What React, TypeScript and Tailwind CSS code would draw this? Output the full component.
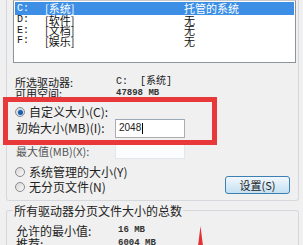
import React from 'react'

const DRIVES = [
  { d: 'C:', label: '[系统]', size: '托管的系统', selected: true },
  { d: 'D:', label: '[软件]', size: '无' },
  { d: 'E:', label: '[文档]', size: '无' },
  { d: 'F:', label: '[娱乐]', size: '无' },
]

const cjk = "font-['Noto_Sans_CJK_SC','Liberation_Sans',sans-serif]"
const mono = "font-['Liberation_Mono','Noto_Sans_CJK_SC',monospace]"

function Radio({ checked }: { checked?: boolean }) {
  return (
    <span className="w-[10px] h-[10px] rounded-full border border-[#8a8a8a] bg-gradient-to-br from-[#d6d6d6] to-[#fbfbfb] flex items-center justify-center shrink-0">
      {checked && <span className="w-[5px] h-[5px] rounded-full bg-[#1d5fa8] shadow-[0_0_2px_#5aa0e8]" />}
    </span>
  )
}

export default function App() {
  return (
    <div className={`w-[303px] h-[245px] overflow-hidden bg-[#f0f0f0] relative text-[11px] text-[#222] ${cjk}`}>

      {/* ── Per-drive group ───────────────────────────── */}
      <div className="ml-[6px] w-[293px] h-[201px] border-x border-b border-[#d5d9de] rounded-b-[3px] flex flex-col">

        {/* Drive list */}
        <div className="ml-[6px] w-[283px] h-[63px] bg-white border border-[#8e9299] border-t-[#c8c8c8] pt-[1px] pl-[1px] pr-[1px]">
          {DRIVES.map((r) => (
            <div
              key={r.d}
              className={`flex items-center leading-none ${r.selected ? 'h-[13px] bg-[#3d8fe6] text-white' : 'h-[10.5px] text-[#111]'}`}
            >
              <span className={`w-[30px] pl-[2px] ${mono} text-[10px]`}>{r.d}</span>
              <span className="w-[139px] text-[11px]">{r.label}</span>
              <span className="text-[11px]">{r.size}</span>
            </div>
          ))}
        </div>

        {/* Selected drive info */}
        <div className="mt-[13px] h-[12px] flex items-center pl-[8px] leading-none">
          <span className="w-[101px]">所选驱动器:</span>
          <span className={`${mono} text-[10px]`}>C:&nbsp;&nbsp;[系统]</span>
        </div>
        <div className="h-[11px] flex items-center pl-[8px] leading-none">
          <span className="w-[101px]">可用空间:</span>
          <span className={`${mono} text-[9px] font-bold text-[#333]`}>47898 MB</span>
        </div>

        {/* Highlighted custom size */}
        <div className="-mt-[2px] -ml-[4px] w-[214px] h-[48px] border-[5px] border-[#e8383a] relative z-10 flex flex-col">
          <div className="mt-[4px] h-[12px] flex items-center gap-[4px] pl-[7px] leading-none text-[12px]">
            <Radio checked />
            <span>自定义大小(C):</span>
          </div>
          <div className="h-[20px] flex items-center pl-[8px] leading-none text-[12px]">
            <span className="w-[99px]">初始大小(MB)(I):</span>
            <div className="w-[70px] h-[19px] bg-white border border-[#abadb3] border-t-[#9ba8b8] flex items-center pl-[3px] text-[10px] font-['Liberation_Sans',sans-serif]">
              2048<span className="w-px h-[11px] bg-black ml-px" />
            </div>
          </div>
        </div>

        <div className="-mt-[2px] h-[16px] flex items-center pl-[9px] leading-none text-[11px] text-[#555]">
          <span className="w-[99px]">最大值(MB)(X):</span>
          <div className="w-[70px] h-[15px] bg-[#fbfcfd] border border-[#e3e6ea]" />
        </div>

        <div className="mt-[7px] h-[12px] flex items-center gap-[4px] pl-[8px] leading-none text-[12px]">
          <Radio />
          <span>系统管理的大小(Y)</span>
        </div>
        <div className="mt-[2px] h-[14px] flex items-center gap-[4px] pl-[8px] leading-none text-[12px]">
          <Radio />
          <span>无分页文件(N)</span>
          <button className="ml-auto mr-[8px] -mt-[4px] w-[65px] h-[18px] rounded-[3px] border border-[#3c7fb1] bg-gradient-to-b from-[#f1f8fd] to-[#c4e0f2] text-[11px] leading-none">
            设置(S)
          </button>
        </div>
      </div>

      {/* ── Totals group ──────────────────────────────── */}
      <div className="mt-[9px] ml-[6px] w-[293px] h-[60px] border-t border-x border-[#d5d9de] rounded-t-[3px] flex flex-col">
        <div className="-mt-[7px] ml-[6px] self-start bg-[#f0f0f0] px-[1px] h-[13px] leading-[13px] text-[12px]">
          所有驱动器分页文件大小的总数
        </div>
        <div className="mt-[7px] h-[13px] flex items-center pl-[9px] leading-none text-[12px]">
          <span className="w-[102px]">允许的最小值:</span>
          <span className={`${mono} text-[9px] font-bold text-[#333]`}>16 MB</span>
        </div>
        <div className="h-[13px] flex items-center pl-[9px] leading-none text-[12px]">
          <span className="w-[102px]">推荐:</span>
          <span className={`${mono} text-[9px] font-bold text-[#333]`}>6004 MB</span>
        </div>
      </div>

      {/* red arrow annotation */}
      <svg className="absolute left-[197px] top-[226px]" width="7" height="20" viewBox="0 0 7 20">
        <path d="M3.5 0 L6 20 L1 20 Z" fill="#e23232" />
      </svg>
    </div>
  )
}
